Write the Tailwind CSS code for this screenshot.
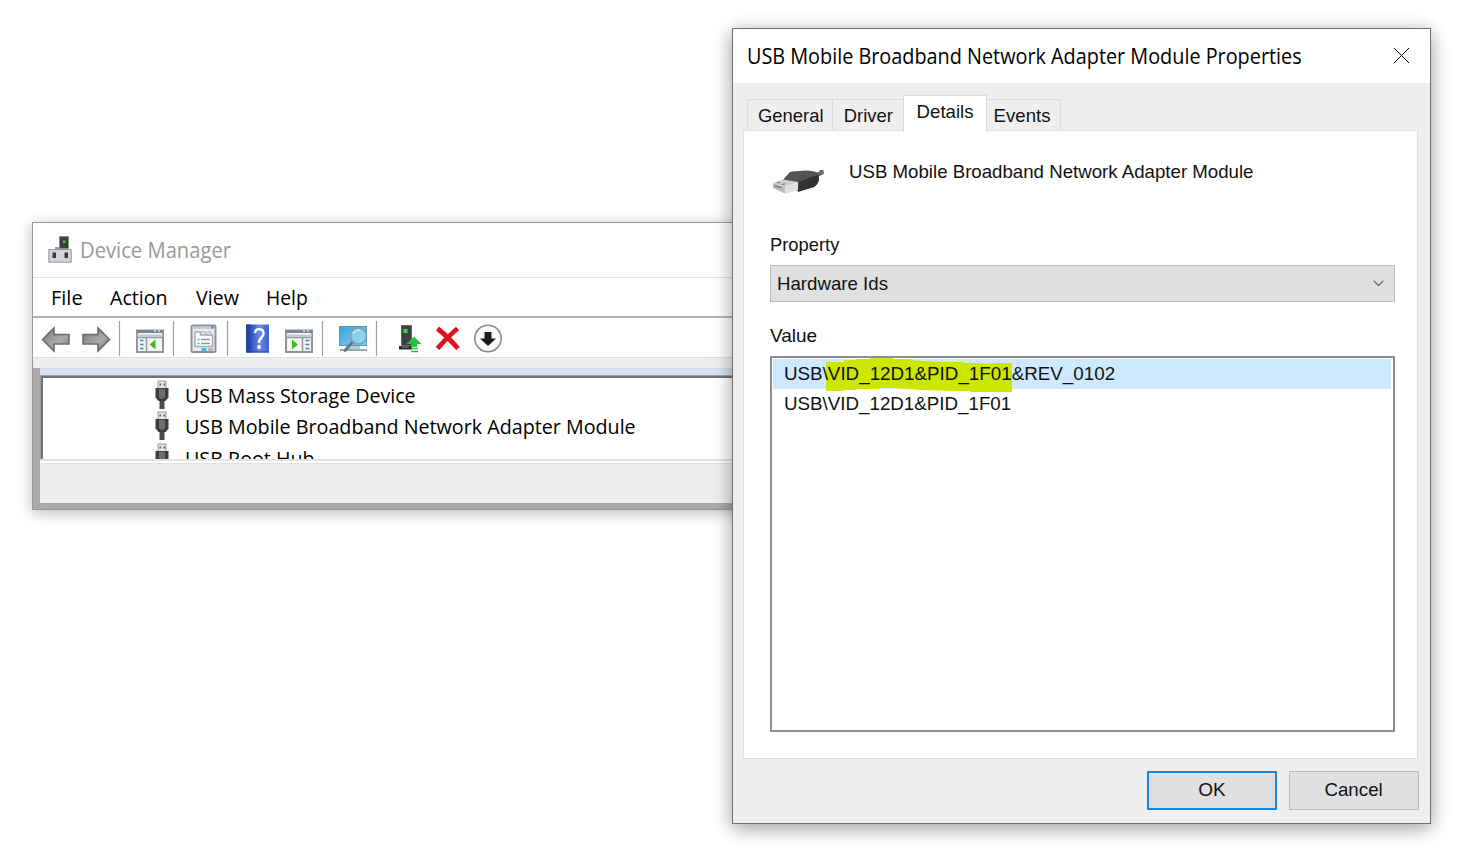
<!DOCTYPE html>
<html lang="en">
<head>
<meta charset="utf-8">
<title>Device Manager</title>
<script src="https://cdn.jsdelivr.net/npm/@tailwindcss/browser@4"></script>
</head>
<body class="relative h-[860px] w-[1465px] overflow-hidden bg-white text-black">

<!-- Device Manager window -->
<section class="absolute left-[32px] top-[222px] flex h-[288px] w-[760px] flex-col border border-[#999] bg-[#efefef] font-['Open_Sans',sans-serif] shadow-[0_3px_14px_rgba(0,0,0,0.27)]">
  <header class="flex h-[55px] shrink-0 items-center border-b border-[#e0e0e0] bg-white pl-[15px]">
    <svg class="mb-[3px] h-[28px] w-[24px]" viewBox="0 0 24 28">
      <path d="M11.500 1.500h9v12h-9z" fill="#3b3f40" stroke="#8b8b8b"/><path d="M7 12h4v3H7z" fill="#999"/>
      <rect x="15" y="5.500" width="2.500" height="2.500" fill="#38d030"/>
      <path d="M.8 14.500h22.400V27.200H.8z" fill="#d4d4d8" stroke="#96969a"/>
      <rect x="4.500" y="17.500" width="3.500" height="5.500" fill="#3a3a3a"/><rect x="16.500" y="17.500" width="3.500" height="5.500" fill="#3a3a3a"/>
    </svg>
    <h1 class="ml-[8px] mt-[2px] origin-left scale-x-[.962] whitespace-nowrap text-[21px] text-[#999]">Device Manager</h1>
  </header>
  <nav class="flex h-[40px] shrink-0 items-center border-b-2 border-[#b4b4b4] bg-white pl-[18px] pt-[2px] text-[20px]">
    <span class="w-[59px] origin-left">File</span>
    <span class="w-[86px] origin-left scale-x-[.98]">Action</span>
    <span class="w-[70px] origin-left scale-x-[.98]">View</span>
    <span class="origin-left scale-x-[.965]">Help</span>
  </nav>
  <div class="flex h-[40px] shrink-0 items-start border-b border-[#ddd] bg-white pt-px">
    <svg class="h-[38px] w-[480px]" viewBox="33 319 480 38">
      <defs>
        <linearGradient id="arrow" x1="0" y1="0" x2="1" y2="1"><stop offset="0" stop-color="#777"/><stop offset=".6" stop-color="#aaa"/><stop offset="1" stop-color="#777"/></linearGradient>
        <linearGradient id="help" x1="0" y1="0" x2="1" y2="0"><stop offset="0" stop-color="#2849a8"/><stop offset=".25" stop-color="#3457c8"/><stop offset=".6" stop-color="#6b8ae6"/><stop offset="1" stop-color="#3c60d0"/></linearGradient>
        <linearGradient id="screen" x1="0" y1="0" x2="1" y2="1"><stop offset="0" stop-color="#38a3dc"/><stop offset="1" stop-color="#82d2f5"/></linearGradient>
      </defs>
      <!-- back and forward -->
      <path d="M42.500 339.500L54 328v6.500h15v9.500H54v7z" fill="url(#arrow)" stroke="#6c6c6c" stroke-width="1.600"/>
      <path d="M109.500 339.500L98 328v6.500H83v9.500h15v7z" fill="url(#arrow)" stroke="#6c6c6c" stroke-width="1.600"/>
      <path d="M119.500 321v35M173.500 321v35M227.500 321v35M322.500 321v35M376.500 321v35" stroke="#a0a0a0" stroke-width="1.200"/>
      <!-- console tree -->
      <g>
        <rect x="137" y="330.500" width="26" height="21.500" fill="#f5f5f5" stroke="#8f959c" stroke-width="2"/>
        <path d="M137 330h26v3h-26z" fill="#7d8593"/><path d="M154 331h2m2 0h2" stroke="#dce5f0" stroke-width="1.500"/>
        <path d="M137 335.500h26" stroke="#c4c8cf" stroke-width="2"/><path d="M136 337.500h28M146.500 338v13" stroke="#959ba3" stroke-width="1.600"/>
        <path d="M140 340.500h3.500M140 344.500h3.500M140 348.500h3.500" stroke="#4c80c4" stroke-width="1.700"/>
        <path d="M155.500 339.500v10l-6-5z" fill="#4bb82e"/>
      </g>
      <!-- properties -->
      <g>
        <rect x="191.500" y="325.500" width="24" height="26.500" rx="1.500" fill="#e9ecef" stroke="#8e9298" stroke-width="2"/>
        <path d="M192.500 328h22" stroke="#c3cad2" stroke-width="2"/><path d="M211.500 327.500h2" stroke="#54677d" stroke-width="2"/>
        <path d="M195 346.500v-14.500h5.500v3h12v11.500z" fill="#fff" stroke="#a4aab4" stroke-width="1.500"/><path d="M201 332h5v3h5v-3h-4" fill="none" stroke="#a4aab4"/>
        <path d="M197.500 339.500h2M197.500 343.500h2" stroke="#28bde8" stroke-width="1.600"/><path d="M201 339.500h9M201 343.500h9" stroke="#9299a2" stroke-width="1.500"/>
        <path d="M201.500 349.500h5" stroke="#22c9f3" stroke-width="3"/><path d="M208 349.500h5" stroke="#bbb" stroke-width="3"/>
      </g>
      <!-- help -->
      <g>
        <path d="M246 324.500h23v28h-23z" fill="url(#help)"/><path d="M246.500 324.500v28" stroke="#233e91"/><path d="M249 324.500v28" stroke="#2944a3" stroke-width="3"/><path d="M247 352h22" stroke="#2441a0"/>
        <path d="M255 333c.5-5.500 8.500-5 8.500.5 0 4-4.500 4-4.500 9.500" fill="none" stroke="#fff" stroke-width="2.400"/><circle cx="259" cy="347" r="1.900" fill="#fff"/>
      </g>
      <!-- action pane -->
      <g>
        <rect x="286" y="330.500" width="26" height="21.500" fill="#f5f5f5" stroke="#8f959c" stroke-width="2"/>
        <path d="M286 330h26v3h-26z" fill="#7d8593"/><path d="M303 331h2m2 0h2" stroke="#dce5f0" stroke-width="1.500"/>
        <path d="M286 335.500h26" stroke="#c4c8cf" stroke-width="2"/><path d="M285 337.500h28M302.500 338v13" stroke="#959ba3" stroke-width="1.600"/>
        <path d="M305.500 340.500h4M305.500 344.500h4M305.500 348.500h4" stroke="#4c80c4" stroke-width="1.700"/>
        <path d="M292 339.500v10l6-5z" fill="#4bb82e"/>
      </g>
      <!-- scan for hardware changes -->
      <g>
        <path d="M347 346h13v3h-13z" fill="#bac8d2"/><path d="M340 350h27" stroke="#8ca0ae" stroke-width="1.800"/>
        <rect x="339.500" y="326.500" width="27" height="19" fill="url(#screen)" stroke="#4f9bc5"/>
        <path d="M353 341.500l-8 9" stroke="#667885" stroke-width="3" stroke-linecap="round"/>
        <circle cx="358.500" cy="336" r="8" fill="#91d4f5" fill-opacity=".85" stroke="#8c9ca8" stroke-width="1.700"/><path d="M353 334c1-3 4-4 7-4" fill="none" stroke="#c8ebfb" stroke-width="1.500"/>
      </g>
      <!-- update driver -->
      <g>
        <path d="M401.500 325.500h10v20h-10z" fill="#3c4143" stroke="#606466"/><path d="M399 346h13v3.500h-13z" fill="#292d2f"/><path d="M402 347h7" stroke="#888"/>
        <rect x="403.500" y="329" width="4" height="4" fill="#38dc3c"/>
        <path d="M414 336.500l7.500 7.500H417v3h-6v-3h-4.500z" fill="#27c23a"/><path d="M411 348.500h7M411 351.500h7" stroke="#27c23a" stroke-width="1.700"/>
      </g>
      <!-- uninstall -->
      <path d="M437.500 328.500Q447 336 458 348.500M457.500 328.500Q447 337 437.500 348.500" fill="none" stroke="#e0101c" stroke-width="4.800"/>
      <!-- disable -->
      <circle cx="488" cy="338.500" r="13.200" fill="#fafafa" stroke="#8c8c8c" stroke-width="1.600"/>
      <path d="M484.500 332h7v6.500h4.500l-8 7.500-8-7.500h4.500z" fill="#1c1c1c"/>
    </svg>
  </div>
  <div class="h-[10px] shrink-0 bg-[#efefef]"></div>
  <div class="flex min-h-0 flex-1 flex-col border-b-[6px] border-l-[7px] border-[#aaa]">
    <div class="h-[7px] shrink-0 bg-[#d6e2ef]"></div>
    <div class="h-[84px] shrink-0 overflow-hidden border-l border-t border-[#a0a0a0]">
      <ul class="flex h-[83px] flex-col overflow-hidden border-l-2 border-t-2 border-[#747474] bg-white pt-[2px] text-[20px]">
        <li class="flex h-[31.500px] shrink-0 items-center pl-[112px]">
          <svg class="mb-[3px] h-[29px] w-[14px]" viewBox="0 0 14 29"><path d="M3 1h8v8H3z" fill="#e4e4e4" stroke="#999"/><path d="M4.500 3.500h1.500v2H4.500zM8.500 3.500H10v2H8.500z" fill="#555"/><path d="M.5 8h13v9.500l-3 3.500h-7l-3-3.500z" fill="#3d3d3d"/><path d="M4 9h6v8l-2 2H6l-2-2z" fill="#6e6e6e"/><path d="M4.500 21h5v8h-5z" fill="#4b4b4b"/></svg>
          <span class="ml-[16px] origin-left scale-x-[.98] whitespace-nowrap">USB Mass Storage Device</span>
        </li>
        <li class="flex h-[31.500px] shrink-0 items-center pl-[112px]">
          <svg class="mb-[3px] h-[29px] w-[14px]" viewBox="0 0 14 29"><path d="M3 1h8v8H3z" fill="#e4e4e4" stroke="#999"/><path d="M4.500 3.500h1.500v2H4.500zM8.500 3.500H10v2H8.500z" fill="#555"/><path d="M.5 8h13v9.500l-3 3.500h-7l-3-3.500z" fill="#3d3d3d"/><path d="M4 9h6v8l-2 2H6l-2-2z" fill="#6e6e6e"/><path d="M4.500 21h5v8h-5z" fill="#4b4b4b"/></svg>
          <span class="ml-[16px] origin-left scale-x-[.985] whitespace-nowrap">USB Mobile Broadband Network Adapter Module</span>
        </li>
        <li class="flex h-[31.500px] shrink-0 items-center pl-[112px]">
          <svg class="mb-[3px] h-[29px] w-[14px]" viewBox="0 0 14 29"><path d="M3 1h8v8H3z" fill="#e4e4e4" stroke="#999"/><path d="M4.500 3.500h1.500v2H4.500zM8.500 3.500H10v2H8.500z" fill="#555"/><path d="M.5 8h13v9.500l-3 3.500h-7l-3-3.500z" fill="#3d3d3d"/><path d="M4 9h6v8l-2 2H6l-2-2z" fill="#6e6e6e"/><path d="M4.500 21h5v8h-5z" fill="#4b4b4b"/></svg>
          <span class="ml-[16px] origin-left scale-x-[.985] whitespace-nowrap">USB Root Hub</span>
        </li>
      </ul>
    </div>
    <div class="h-[5px] shrink-0 border-b border-t-2 border-[#e2e2e2] bg-white"></div>
    <div class="flex-1 bg-[#efefef]"></div>
  </div>
</section>

<!-- Properties dialog -->
<section class="absolute left-[732px] top-[28px] flex h-[796px] w-[699px] flex-col border border-[#6e6e6e] bg-[#efefef] font-['Liberation_Sans',sans-serif] text-[19px] text-[#111] shadow-[0_4px_18px_rgba(0,0,0,0.4)]">
  <header class="flex h-[54px] shrink-0 items-center justify-between bg-white pl-[14px] pr-[21px] font-['Open_Sans',sans-serif] text-[21px]">
    <h2 class="mt-[2px] origin-left scale-x-[.944] whitespace-nowrap text-black">USB Mobile Broadband Network Adapter Module Properties</h2>
    <svg class="mb-px h-[15px] w-[15px]" viewBox="0 0 15 15"><path d="M0 0l15 15M15 0L0 15" stroke="#000" stroke-width="1"/></svg>
  </header>
  <div class="relative z-10 mb-[-2px] flex h-[49px] shrink-0 items-end pl-[14px] leading-[24px]">
    <div class="mb-[2px] flex h-[31px] w-[86px] items-center justify-center border border-b-0 border-[#dcdcdc] pl-px pt-px"><span class="scale-x-[.97]">General</span></div>
    <div class="mb-[2px] flex h-[31px] w-[70px] items-center justify-center border-t border-[#dcdcdc] pt-px"><span class="scale-x-[.97]">Driver</span></div>
    <div class="flex h-[37px] w-[84px] justify-center border border-b-0 border-[#dcdcdc] bg-white pl-px pt-[4px]"><span class="scale-x-[.98]">Details</span></div>
    <div class="mb-[2px] flex h-[31px] w-[74px] items-center justify-center border border-b-0 border-l-0 border-[#dcdcdc] pr-[2px] pt-px"><span class="scale-x-[.98]">Events</span></div>
  </div>
  <main class="ml-[10px] flex h-[629px] w-[675px] shrink-0 flex-col border border-[#e0e0e0] bg-white pl-[26px] pr-[22px] leading-[24px]">
    <div class="flex h-[102px] shrink-0 items-start pt-[29px]">
      <svg class="ml-[2px] mt-[8px] h-[28px] w-[54px]" viewBox="0 0 54 28">
        <path d="M43 5l4-1 1-2 3.500 0 .5 4-7 3z" fill="#6a6a6a"/>
        <path d="M11 12l6-7q1-1.200 3-1.500L34 2.500q8 0 13 3v6q-1 5-5 7.500l-16 4.500z" fill="#515354"/>
        <path d="M27 14q8-4 20-7v4.500q-1 5-5 7.500l-16 5z" fill="#303233"/>
        <path d="M1 15l10-3.500 15 2.500v8l-13 3.500L1 20z" fill="#cfd0d3"/><path d="M1 15.500l12 3v7L1 20z" fill="#bcbdc0"/><path d="M13 18.500l13-4.500v8l-13 3.500z" fill="#e2e2e5"/>
        <path d="M4 15l3-1.200 2 .6-3 1.200zM9 16.500l3-1.200 2 .6-3 1.200zM2.500 17l7 2v1.500l-7-2z" fill="#777"/>
      </svg>
      <p class="ml-[23px] origin-left scale-x-[.982] whitespace-nowrap">USB Mobile Broadband Network Adapter Module</p>
    </div>
    <label class="h-[32px] w-[80px] shrink-0 origin-left scale-x-[.965]">Property</label>
    <div class="flex h-[37px] shrink-0 items-center justify-between border border-[#bdbdbd] bg-[#e0e0e0] pl-[6px] pr-[10px]">
      <span class="origin-left scale-x-[.982]">Hardware Ids</span>
      <svg class="h-[7px] w-[11px]" viewBox="0 0 11 7"><path d="M.8.8l4.700 4.700L10.200.8" fill="none" stroke="#707070" stroke-width="1.400"/></svg>
    </div>
    <label class="h-[54px] w-[80px] shrink-0 origin-left pt-[22px]">Value</label>
    <ul class="h-[376px] shrink-0 border-2 border-[#8b8e99] bg-white p-px pb-0 pr-[2px]">
      <li class="flex h-[30px] items-center whitespace-nowrap bg-[#cde8ff] pl-[11px]">
        <span class="relative">
          <svg class="absolute left-[42px] top-[-5px] h-[36px] w-[187px]" viewBox="0 0 187 36"><path d="M0 5h18V3h12V2h14V1h23v1h18v1l28 2h25v1h22v.5h8V6h18v29h-42v-1h-19l-26-1H94l-24-2H53v1H30v1H18v1H0z" fill="#cbe600"/></svg>
          <span class="relative block origin-left scale-x-[.989]">USB\VID_12D1&amp;PID_1F01&amp;REV_0102</span>
        </span>
      </li>
      <li class="flex h-[30px] items-center whitespace-nowrap pl-[11px]"><span class="origin-left scale-x-[.987]">USB\VID_12D1&amp;PID_1F01</span></li>
    </ul>
  </main>
  <footer class="flex justify-end gap-[12px] pr-[11px] pt-[12px]">
    <button class="flex h-[39px] w-[130px] items-center justify-center border-2 border-[#1a84da] bg-[#e0e0e0]"><span>OK</span></button>
    <button class="flex h-[39px] w-[130px] items-center justify-center border border-[#bcbcbc] bg-[#e0e0e0]"><span class="scale-x-[.985]">Cancel</span></button>
  </footer>
</section>
</body>
</html>
